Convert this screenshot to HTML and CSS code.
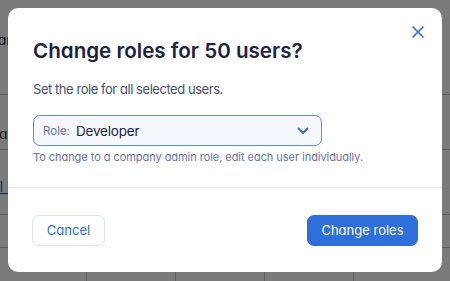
FILE: index.html
```html
<!DOCTYPE html>
<html lang="en">
<head>
<meta charset="utf-8">
<title>Change roles</title>
<link rel="stylesheet" href="styles.css">
</head>
<body>
<div class="page">
  <div class="row r1"><span class="frag f1">Mar</span></div>
  <div class="row r2"><span class="frag f2">Dat</span></div>
  <div class="row r3"><span class="frag link">Al i</span></div>
  <div class="row r4"></div>
  <div class="row r5">
    <div class="cell"></div><div class="cell"></div><div class="cell"></div><div class="cell"></div><div class="cell last"></div>
  </div>
</div>
<div class="overlay"></div>
<div class="modal" role="dialog">
  <div class="body">
    <div class="head">
      <h1 class="title">Change roles for 50 users?</h1>
      <button class="close" aria-label="Close">
        <svg width="12" height="12" viewBox="0 0 12 12"><path d="M1 1L11 11M11 1L1 11" stroke="#2f6fd9" stroke-width="1.6" stroke-linecap="round"/></svg>
      </button>
    </div>
    <p class="sub">Set the role for all selected users.</p>
    <div class="select">
      <span class="lbl">Role:</span>
      <span class="val">Developer</span>
      <svg class="chev" width="12" height="8" viewBox="0 0 12 8"><path d="M1.5 1.5L6 6L10.5 1.5" fill="none" stroke="#2f6fd9" stroke-width="1.9" stroke-linecap="round" stroke-linejoin="round"/></svg>
    </div>
    <p class="hint">To change to a company admin role, edit each user individually.</p>
  </div>
  <div class="foot">
    <button class="btn ghost">Cancel</button>
    <button class="btn primary">Change roles</button>
  </div>
</div>
</body>
</html>
```
FILE: styles.css
```css
* { box-sizing: border-box; }
html, body { margin: 0; padding: 0; }
body {
  width: 450px;
  height: 281px;
  overflow: hidden;
  font-family: Inter, "Noto Sans", sans-serif;
  font-feature-settings: "cv11" 1;
  background: #fff;
  position: relative;
}
.page { display: flex; flex-direction: column; }
.row { border-bottom: 1px solid #c4c4c4; position: relative; }
.r1 { height: 95px; }
.r2 { height: 55px; }
.r3 { height: 65px; }
.r4 { height: 33px; }
.r5 { height: 40px; display: flex; border-bottom: none; }
.cell { width: 89px; border-right: 1px solid #c4c4c4; }
.cell:first-child { width: 87px; }
.cell.last { border-right: none; flex: 1; }
.frag { position: absolute; font-size: 14px; color: #333; white-space: nowrap; }
.f1 { top: 31px; left: -15px; }
.f2 { top: 30px; left: -11px; }
.link { top: 28px; color: #1b4fb0; text-decoration: underline; left: -10px; }
.overlay {
  position: absolute;
  inset: 0;
  background: rgba(0, 0, 0, 0.52);
}
.modal {
  position: absolute;
  left: 8px;
  top: 8px;
  width: 434px;
  height: 264px;
  background: #fff;
  border-radius: 10px;
  display: flex;
  flex-direction: column;
}
.body {
  padding: 28px 18px 0 25px;
  height: 180px;
  border-bottom: 1px solid #e5e7f0;
}
.head { display: flex; justify-content: space-between; align-items: flex-start; }
.title {
  margin: 0;
  font-size: 20.6px;
  line-height: 30px;
  font-weight: 600;
  color: #1c2340;
}
.close {
  border: 0;
  background: none;
  padding: 0;
  width: 12px;
  height: 12px;
  margin-top: -10px;
  display: flex;
}
.sub {
  margin: 13px 0 0;
  font-size: 13px;
  letter-spacing: -0.45px;
  line-height: 20px;
  color: #4a5170;
}
.select {
  margin-top: 16px;
  width: 289px;
  height: 31px;
  border: 1px solid #5b8de3;
  border-radius: 7px;
  background: #f6f8fd;
  display: flex;
  align-items: center;
  padding: 0 12px 0 9px;
}
.lbl { font-size: 11.5px; color: #6b73a0; margin-right: 6px; }
.val { font-size: 13.5px; color: #1c2340; flex: 1; letter-spacing: -0.2px; }
.hint {
  margin: 4px 0 0;
  font-size: 11px;
  letter-spacing: -0.05px;
  line-height: 14px;
  color: #6a71a8;
}
.foot {
  display: flex;
  justify-content: space-between;
  align-items: center;
  padding: 0 24px 0 24px;
  flex: 1;
}
.btn {
  height: 31px;
  border-radius: 7px;
  font-family: inherit;
  font-feature-settings: "cv11" 1;
  font-size: 13px;
  padding: 0;
  white-space: nowrap;
}
.ghost {
  background: #fff;
  border: 1px solid #dfe4f5;
  color: #2f6fd9;
  width: 73px;
}
.primary {
  background: #2f6fd9;
  border: 1px solid #2f6fd9;
  color: #fff;
  width: 111px;
}
```
